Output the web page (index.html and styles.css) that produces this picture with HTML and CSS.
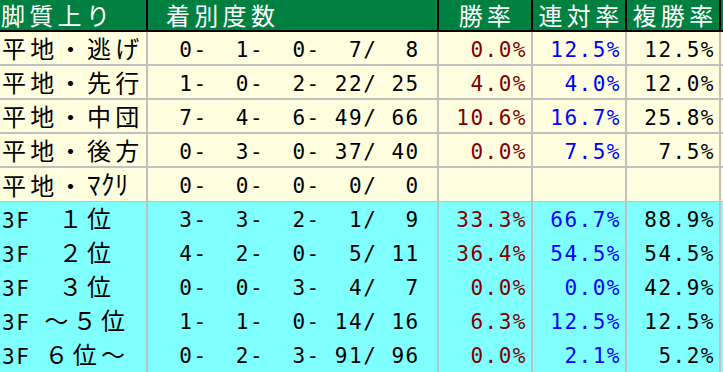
FILE: index.html
```html
<!DOCTYPE html>
<html lang="ja">
<head>
<meta charset="utf-8">
<title>脚質上り</title>
<link rel="stylesheet" href="styles.css">
</head>
<body>
<div class="table">
  <div class="row head">
    <div class="cell lbl">脚質上り</div>
    <div class="cell cnt-h">着別度数</div>
    <div class="cell ctr">勝率</div>
    <div class="cell ctr">連対率</div>
    <div class="cell ctr">複勝率</div>
    <div class="cell ext"></div>
  </div>
  <div class="row cream">
    <div class="cell lbl">平地・逃げ</div>
    <div class="cell cnt">  0-  1-  0-  7/  8</div>
    <div class="cell pct r">0.0%</div>
    <div class="cell pct b">12.5%</div>
    <div class="cell pct">12.5%</div>
    <div class="cell ext"></div>
  </div>
  <div class="row cream">
    <div class="cell lbl">平地・先行</div>
    <div class="cell cnt">  1-  0-  2- 22/ 25</div>
    <div class="cell pct r">4.0%</div>
    <div class="cell pct b">4.0%</div>
    <div class="cell pct">12.0%</div>
    <div class="cell ext"></div>
  </div>
  <div class="row cream">
    <div class="cell lbl">平地・中団</div>
    <div class="cell cnt">  7-  4-  6- 49/ 66</div>
    <div class="cell pct r">10.6%</div>
    <div class="cell pct b">16.7%</div>
    <div class="cell pct">25.8%</div>
    <div class="cell ext"></div>
  </div>
  <div class="row cream">
    <div class="cell lbl">平地・後方</div>
    <div class="cell cnt">  0-  3-  0- 37/ 40</div>
    <div class="cell pct r">0.0%</div>
    <div class="cell pct b">7.5%</div>
    <div class="cell pct">7.5%</div>
    <div class="cell ext"></div>
  </div>
  <div class="row cream">
    <div class="cell lbl">平地・<span class="hk">ﾏｸﾘ</span></div>
    <div class="cell cnt">  0-  0-  0-  0/  0</div>
    <div class="cell pct r"></div>
    <div class="cell pct b"></div>
    <div class="cell pct"></div>
    <div class="cell ext"></div>
  </div>
  <div class="row cyan">
    <div class="cell lbl"><span class="asc">3F</span>　１位</div>
    <div class="cell cnt">  3-  3-  2-  1/  9</div>
    <div class="cell pct r">33.3%</div>
    <div class="cell pct b">66.7%</div>
    <div class="cell pct">88.9%</div>
    <div class="cell ext"></div>
  </div>
  <div class="row cyan">
    <div class="cell lbl"><span class="asc">3F</span>　２位</div>
    <div class="cell cnt">  4-  2-  0-  5/ 11</div>
    <div class="cell pct r">36.4%</div>
    <div class="cell pct b">54.5%</div>
    <div class="cell pct">54.5%</div>
    <div class="cell ext"></div>
  </div>
  <div class="row cyan">
    <div class="cell lbl"><span class="asc">3F</span>　３位</div>
    <div class="cell cnt">  0-  0-  3-  4/  7</div>
    <div class="cell pct r">0.0%</div>
    <div class="cell pct b">0.0%</div>
    <div class="cell pct">42.9%</div>
    <div class="cell ext"></div>
  </div>
  <div class="row cyan">
    <div class="cell lbl"><span class="asc">3F </span>～５位</div>
    <div class="cell cnt">  1-  1-  0- 14/ 16</div>
    <div class="cell pct r">6.3%</div>
    <div class="cell pct b">12.5%</div>
    <div class="cell pct">12.5%</div>
    <div class="cell ext"></div>
  </div>
  <div class="row cyan">
    <div class="cell lbl"><span class="asc">3F </span>６位～</div>
    <div class="cell cnt">  0-  2-  3- 91/ 96</div>
    <div class="cell pct r">0.0%</div>
    <div class="cell pct b">2.1%</div>
    <div class="cell pct">5.2%</div>
    <div class="cell ext"></div>
  </div>
</div>
</body>
</html>
```

FILE: styles.css
```css
html, body {
  margin: 0;
  padding: 0;
  background: #ffffff;
}
body {
  width: 723px;
  height: 372px;
  overflow: hidden;
}
.table {
  display: flex;
  flex-direction: column;
  width: 723px;
}
.row {
  display: grid;
  grid-template-columns: 148px 291px 94px 94px 94px 1fr;
  height: 34px;
}
.row.head {
  height: 32px;
  background: #008040;
  color: #ffffff;
}
.row.cream { background: #ffffe0; }
.row.cyan { background: #80ffff; }

.cell {
  box-sizing: border-box;
  border-right: 2px solid #c0c0c0;
  border-bottom: 2px solid #c0c0c0;
  white-space: pre;
  color: #000000;
}
.head .cell {
  border-color: #000000;
  color: #ffffff;
}
.cell.ext { border-right: 0; }

.lbl, .cnt-h, .ctr {
  font-family: "Noto Sans CJK JP", "Noto Sans CJK SC", sans-serif;
  font-size: 24px;
  letter-spacing: 4.3px;
  line-height: 32px;
  padding-left: 2px;
}
.head .lbl, .head .cnt-h, .head .ctr {
  line-height: 30px;
}
.head .lbl { padding-left: 1px; }
.cnt-h { padding-left: 18px; }
.ctr {
  text-align: center;
  padding-left: 4px;
  padding-right: 0;
}
.asc {
  font-family: "DejaVu Sans Mono", monospace;
  font-size: 21px;
  letter-spacing: 1.5px;
}
.hk {
  font-size: 27px;
  letter-spacing: 0.6px;
}

.cnt, .pct {
  font-family: "DejaVu Sans Mono", monospace;
  font-size: 21px;
  letter-spacing: 1.5px;
  line-height: 28px;
  padding-top: 4px;
}
.cnt { padding-left: 3px; }
.pct {
  text-align: right;
  padding-right: 4px;
}
.pct.r { color: #800000; }
.pct.b { color: #0000ff; }
```
